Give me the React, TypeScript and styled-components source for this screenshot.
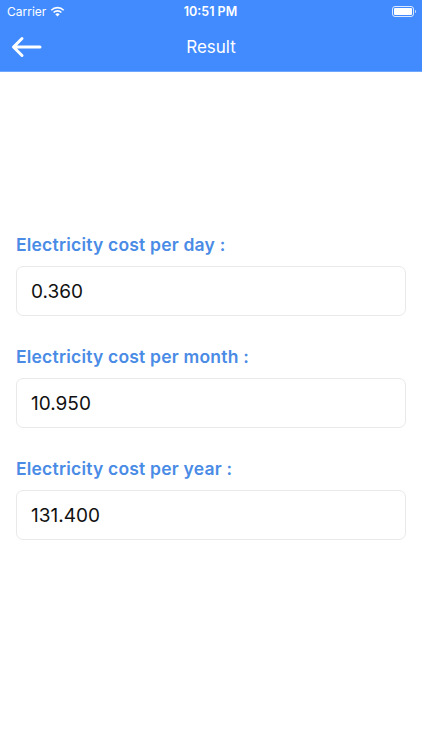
import styled, { createGlobalStyle } from "styled-components";

const GlobalStyle = createGlobalStyle`
    html, body {
        margin: 0;
        padding: 0;
        background: #ffffff;
        font-family: Inter, "Liberation Sans", Arial, sans-serif;
    }
    * {
        box-sizing: border-box;
    }
`;

const Screen = styled.div`
    width: 422px;
    height: 750px;
    display: flex;
    flex-direction: column;
    background: #ffffff;
`;

const Header = styled.div`
    background: #428bff;
    border-bottom: 1px solid #6fa7ff;
    display: flex;
    flex-direction: column;
`;

const StatusBar = styled.div`
    height: 22px;
    padding: 0 8px 0 7px;
    display: flex;
    align-items: center;
    justify-content: space-between;
    color: #ffffff;
    font-size: 12px;
`;

const StatusSide = styled.div`
    width: 110px;
    display: flex;
    align-items: center;
    gap: 4px;
`;

const StatusRight = styled(StatusSide)`
    justify-content: flex-end;
`;

const Time = styled.span`
    font-weight: 600;
    font-size: 12.5px;
`;

const Battery = styled.div`
    width: 22px;
    height: 11px;
    border: 1px solid rgba(255, 255, 255, 0.8);
    border-radius: 3px;
    padding: 1px;
    position: relative;
    &::before {
        content: "";
        display: block;
        width: 100%;
        height: 100%;
        background: #ffffff;
        border-radius: 1px;
    }
    &::after {
        content: "";
        position: absolute;
        right: -3px;
        top: 3px;
        width: 1.5px;
        height: 3px;
        background: rgba(255, 255, 255, 0.7);
        border-radius: 0 1px 1px 0;
    }
`;

const NavBar = styled.div`
    height: 49px;
    display: grid;
    grid-template-columns: 60px 1fr 60px;
    align-items: center;
`;

const BackButton = styled.button`
    background: none;
    border: none;
    padding: 0 0 0 10px;
    display: flex;
    align-items: center;
    cursor: pointer;
`;

const Title = styled.h1`
    margin: 0;
    text-align: center;
    color: #ffffff;
    font-size: 17px;
    font-weight: 400;
`;

const Content = styled.div`
    padding: 162px 16px 0;
    display: flex;
    flex-direction: column;
    gap: 30px;
`;

const Field = styled.div`
    display: flex;
    flex-direction: column;
    gap: 10px;
`;

const Label = styled.div`
    color: #4a8be6;
    font-size: 17.5px;
    font-weight: 600;
    letter-spacing: 0.2px;
    line-height: 22px;
`;

const ValueBox = styled.div`
    height: 50px;
    border: 1px solid #e9e9e9;
    border-radius: 7px;
    padding: 0 14px;
    display: flex;
    align-items: center;
    color: #111111;
    font-size: 19px;
`;

const WifiIcon = () => (
    <svg width="15" height="11" viewBox="0 0 15 11">
        <path d="M7.5 10.5 L5.3 8.2 A3.2 3.2 0 0 1 9.7 8.2 Z" fill="#fff" />
        <path d="M3.6 6.5 A5.6 5.6 0 0 1 11.4 6.5" stroke="#fff" strokeWidth="1.6" fill="none" />
        <path d="M1.3 4.2 A8.8 8.8 0 0 1 13.7 4.2" stroke="#fff" strokeWidth="1.6" fill="none" />
    </svg>
);

const BackArrow = () => (
    <svg width="32" height="22" viewBox="0 0 32 22">
        <path
            d="M30 11 H4 M12 2.5 L3.5 11 L12 19.5"
            stroke="#ffffff"
            strokeWidth="3"
            fill="none"
            strokeLinecap="round"
            strokeLinejoin="round"
        />
    </svg>
);

const results = [
    { label: "Electricity cost per day :", value: "0.360" },
    { label: "Electricity cost per month :", value: "10.950" },
    { label: "Electricity cost per year :", value: "131.400" },
];

const App = () => {
    return (
        <Screen>
            <GlobalStyle />
            <Header>
                <StatusBar>
                    <StatusSide>
                        <span>Carrier</span>
                        <WifiIcon />
                    </StatusSide>
                    <Time>10:51 PM</Time>
                    <StatusRight>
                        <Battery />
                    </StatusRight>
                </StatusBar>
                <NavBar>
                    <BackButton>
                        <BackArrow />
                    </BackButton>
                    <Title>Result</Title>
                    <div />
                </NavBar>
            </Header>
            <Content>
                {results.map((r) => (
                    <Field key={r.label}>
                        <Label>{r.label}</Label>
                        <ValueBox>{r.value}</ValueBox>
                    </Field>
                ))}
            </Content>
        </Screen>
    );
};

export default App;
